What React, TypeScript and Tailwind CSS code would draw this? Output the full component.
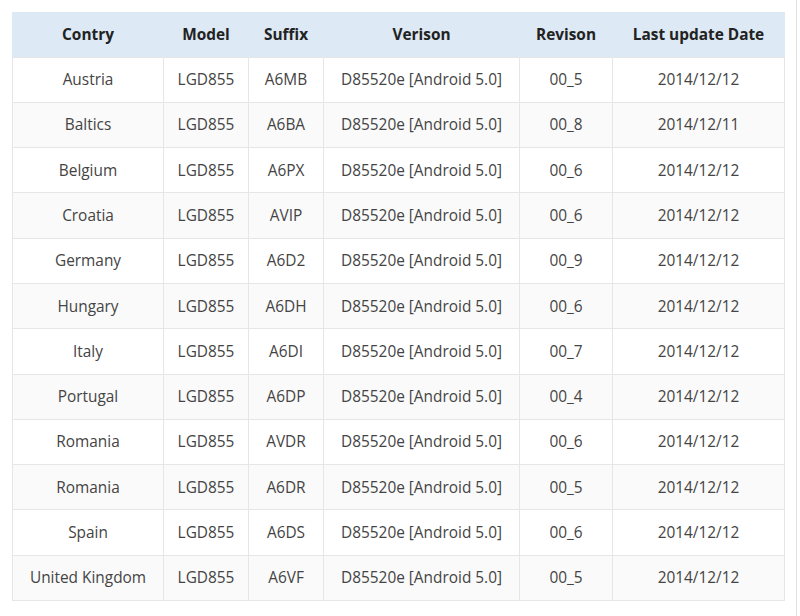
const rows = [
  ["Austria","A6MB","00_5","2014/12/12"],
  ["Baltics","A6BA","00_8","2014/12/11"],
  ["Belgium","A6PX","00_6","2014/12/12"],
  ["Croatia","AVIP","00_6","2014/12/12"],
  ["Germany","A6D2","00_9","2014/12/12"],
  ["Hungary","A6DH","00_6","2014/12/12"],
  ["Italy","A6DI","00_7","2014/12/12"],
  ["Portugal","A6DP","00_4","2014/12/12"],
  ["Romania","AVDR","00_6","2014/12/12"],
  ["Romania","A6DR","00_5","2014/12/12"],
  ["Spain","A6DS","00_6","2014/12/12"],
  ["United Kingdom","A6VF","00_5","2014/12/12"],
];
const widths = ["w-[151px]","w-[85px]","w-[75px]","w-[196px]","w-[93px]","w-[172px]"];
export default function App() {
  return (
    <div className="w-[800px] h-[616px] bg-white relative pt-[12px] pl-[12px]" style={{fontFamily:'"Open Sans", sans-serif'}}>
      <div className="absolute right-[3px] top-0 h-full w-px bg-[#e2e2e2]" />
      <table className="border-collapse text-[15.4px] text-[#444]" style={{tableLayout:'fixed', width:772}}>
        <thead>
          <tr className="bg-[#dde9f4] h-[45px]">
            {["Contry","Model","Suffix","Verison","Revison","Last update Date"].map((h,i)=>(
              <th key={i} className={`${widths[i]} font-bold text-[#222] text-center border-x border-[#dde9f4]`}>{h}</th>
            ))}
          </tr>
        </thead>
        <tbody>
          {rows.map((r,i)=>(
            <tr key={i} className={`h-[45.3px] ${i%2===1?"bg-[#fafafa]":"bg-white"}`}>
              {[r[0],"LGD855",r[1],"D85520e [Android 5.0]",r[2],r[3]].map((c,j)=>(
                <td key={j} className="text-center border border-[#e6e6e6]">{c}</td>
              ))}
            </tr>
          ))}
        </tbody>
      </table>
    </div>
  );
}
